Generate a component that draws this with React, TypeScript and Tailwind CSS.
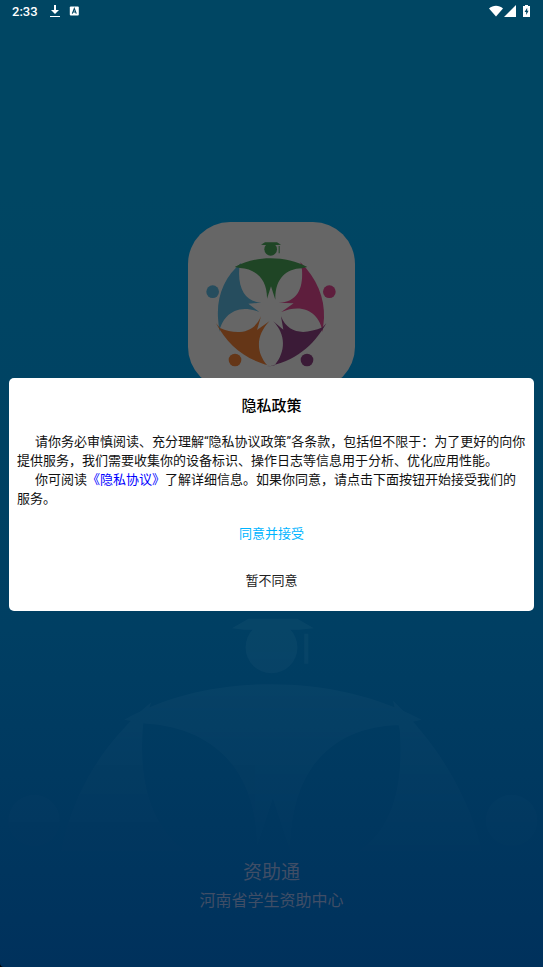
interface Figure {
    name: string
    color: string
    body: string
    cx: number
    cy: number
}

const figures: Figure[] = [
    {
        name: "teal",
        color: "fill-[#264d5e]",
        body: "M184 144C135 185 110 240 114 310L118 352C124 310 165 262 238 292L205 267L244 264C200 262 172 225 178 160Z",
        cx: 98,
        cy: 231
    },
    {
        name: "pink",
        color: "fill-[#5e1e3d]",
        body: "M361 143C410 190 435 250 432 310L428 352C420 300 375 262 304 292L341 266L296 264C350 262 370 225 366 165Z",
        cx: 448,
        cy: 231
    },
    {
        name: "orange",
        color: "fill-[#653617]",
        body: "M108 326C145 395 200 440 287 457L262 452C225 410 230 360 268 320L231 346L243 305C220 360 165 360 120 340Z",
        cx: 165,
        cy: 436
    },
    {
        name: "purple",
        color: "fill-[#3b1b37]",
        body: "M439 326C400 395 345 440 259 457L284 452C318 410 318 360 280 320L310 345L303 305C325 360 375 360 428 338Z",
        cx: 381,
        cy: 436
    },
    {
        name: "green",
        color: "fill-[#1f4525]",
        body: "M164 157C195 140 230 131 272 131C312 131 350 140 382 157L365 161C320 162 285 190 286 255L273 215L261 252C262 195 230 163 180 160Z",
        cx: 272,
        cy: 104
    }
]

function Emblem({ plain = false }: { plain?: boolean }) {
    return (
        <>
            {
                figures.map( fig => (
                    <g key={fig.name} className={ plain ? "fill-white" : fig.color }>
                        <path d={fig.body} />
                        <circle cx={fig.cx} cy={fig.cy} r="19" />
                    </g>
                ))
            }
            <path
                d="M243 90L255 83H291L303 90L292 91H252ZM296 94H299V116H296Z"
                className={ plain ? "fill-white" : "fill-[#1f4525]" }
            />
        </>
    )
}

function StatusBar() {
    return (
        <header className="relative z-20 flex h-[22px] items-center justify-between pr-[13px] pl-3 text-white">
            <div className="flex items-center">
                <span className="font-[Roboto] text-[13px] font-medium leading-none">2:33</span>
                <svg className="ml-3 h-3 w-[10px]" viewBox="0 0 10 12" fill="none" stroke="currentColor">
                    <path d="M5 0V8" strokeWidth="2" />
                    <path d="M1 5H9L5 9Z" fill="currentColor" stroke="none" />
                    <path d="M0 11.5H10" />
                </svg>
                <svg className="ml-[9px] size-[10px]" viewBox="0 0 10 10">
                    <rect x="0.8" y="0.5" width="9" height="9" rx="1" fill="currentColor" />
                    <path d="M3.3 7.6L5.3 2.6L7.3 7.6M4 6H6.6" fill="none" stroke="#004561" strokeWidth="1.1" />
                </svg>
            </div>
            <div className="flex items-center">
                <svg className="h-3 w-[14px]" viewBox="0 0 14 12" fill="currentColor">
                    <path d="M0 3.4C4 -0.2 10 -0.2 14 3.4L7 11.5Z" />
                </svg>
                <svg className="ml-px size-3" viewBox="0 0 12 12" fill="currentColor">
                    <path d="M12 0V12H0Z" />
                </svg>
                <svg className="ml-[7px] h-3 w-[7px]" viewBox="0 0 7 12">
                    <path d="M2 0H5V1H7V12H0V1H2Z" fill="currentColor" />
                    <path d="M4.2 2.8L1.6 7H3.2V10L5.6 5.8H4.2Z" fill="#004561" />
                </svg>
            </div>
        </header>
    )
}

function PrivacyDialog() {
    return (
        <div className="absolute inset-x-0 top-[22px] bottom-0 z-10 flex items-center px-[9px]">
            <section
                role="dialog"
                aria-modal="true"
                aria-labelledby="privacy-title"
                className="w-full rounded-[5px] bg-white px-2 pt-[18px] pb-3 text-[13px] text-black"
            >
                <h2 id="privacy-title" className="text-center text-[15px] leading-5 font-medium">隐私政策</h2>
                <div className="mt-4 leading-[19px] text-[#111111]">
                    <p className="indent-[18px]">
                        请你务必审慎阅读、充分理解“隐私协议政策”各条款，包括但不限于：为了更好的向你提供服务，我们需要收集你的设备标识、操作日志等信息用于分析、优化应用性能。
                    </p>
                    <p className="indent-[18px]">
                        你可阅读<a href="#privacy" className="text-[#0000ff]">《隐私协议》</a>了解详细信息。如果你同意，请点击下面按钮开始接受我们的服务。
                    </p>
                </div>
                <div className="mt-2 flex flex-col items-center gap-[11px]">
                    <button type="button" className="h-9 px-6 text-[#00b4ff]">同意并接受</button>
                    <button type="button" className="h-9 px-6 text-[#222222]">暂不同意</button>
                </div>
            </section>
        </div>
    )
}

export default function App() {
    return (
        <div className="bg-black">
            <main className="relative flex min-h-screen flex-col overflow-hidden rounded-bl-[4px] bg-linear-to-b from-[#004663] from-20% via-[#003f63] via-65% to-[#00315c] font-[Roboto,'Noto_Sans_CJK_SC',sans-serif]">
                <StatusBar />
                <svg
                    className="absolute inset-x-0 bottom-0 w-full mask-b-from-10% mask-b-to-75% opacity-[0.028]"
                    viewBox="73 81 398 257"
                    aria-hidden="true"
                >
                    <Emblem plain />
                </svg>
                <div className="mx-auto mt-[200px] w-[167px] overflow-hidden rounded-[42px] bg-[#666666]">
                    <svg viewBox="24 22 501 501" role="img" aria-label="资助通">
                        <Emblem />
                    </svg>
                </div>
                <footer className="relative mt-auto pb-[54px] text-center text-[#404e66]">
                    <h1 className="text-[19px] leading-7">资助通</h1>
                    <p className="mt-0.5 text-base leading-6">河南省学生资助中心</p>
                </footer>
                <PrivacyDialog />
            </main>
        </div>
    );
}
